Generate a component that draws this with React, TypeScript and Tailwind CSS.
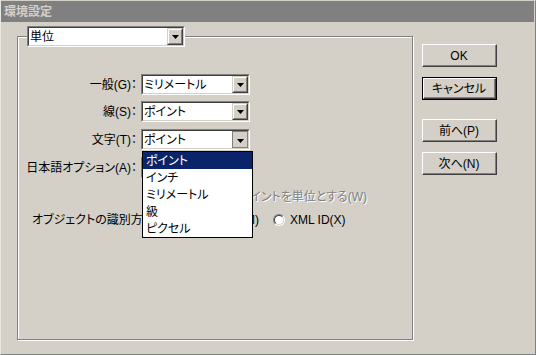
import React from "react";

const FONT = "[font-family:'Liberation_Sans','Noto_Sans_CJK_JP',sans-serif] [font-feature-settings:'palt']";

function Arrow() {
  return (
    <svg width="7" height="4" viewBox="0 0 7 4">
      <path d="M0 0h7L3.5 4z" fill="#000" />
    </svg>
  );
}

function Combo({ text, width, open }: { text: string; width: number; open?: boolean }) {
  return (
    <div
      className="h-[21px] flex border-t border-l border-t-[#808080] border-l-[#808080] border-b border-r border-b-white border-r-white"
      style={{ width }}
    >
      <div className="flex-1 flex border-t border-l border-t-[#404040] border-l-[#404040] border-b border-r border-b-[#d4d0c8] border-r-[#d4d0c8] bg-white">
        <div className="flex-1 flex items-center pl-[1px] text-[12px] leading-none text-black whitespace-nowrap overflow-hidden">
          {text}
        </div>
        {open ? (
          <div className="w-[16px] flex items-center justify-center bg-[#d4d0c8] border border-[#808080] pt-[2px] pl-[1px]">
            <Arrow />
          </div>
        ) : (
          <div className="w-[16px] flex border-t border-l border-t-[#d4d0c8] border-l-[#d4d0c8] border-b border-r border-b-[#404040] border-r-[#404040]">
            <div className="flex-1 flex items-center justify-center bg-[#d4d0c8] border-t border-l border-t-white border-l-white border-b border-r border-b-[#808080] border-r-[#808080]">
              <Arrow />
            </div>
          </div>
        )}
      </div>
    </div>
  );
}

function Btn({ label, def }: { label: string; def?: boolean }) {
  const inner = (
    <div className="flex-1 flex border-t border-l border-t-white border-l-white border-b border-r border-b-[#404040] border-r-[#404040]">
      <div className="flex-1 flex items-center justify-center border-b border-r border-b-[#808080] border-r-[#808080] text-[12px] text-black leading-none pt-[1px]">
        {label}
      </div>
    </div>
  );
  return (
    <div className={"w-[75px] h-[23px] flex " + (def ? "border border-black" : "")}>{inner}</div>
  );
}

function Row({ label, children, mt }: { label: string; children: React.ReactNode; mt: string }) {
  return (
    <div className={"flex items-center " + mt}>
      <div className="w-[119px] flex justify-end text-[12px] text-black whitespace-nowrap leading-none">{label}</div>
      <div className="ml-[4px]">{children}</div>
    </div>
  );
}

export default function App() {
  return (
    <div className={"w-[536px] h-[355px] bg-[#d4d0c8] relative flex flex-col overflow-hidden border-t border-t-[#d4d0c8] border-l border-l-[#e8e6e0] border-r border-r-[#808080] border-b border-b-[#808080] " + FONT}>
      <div className="h-[21px] bg-[#808080] flex items-center pl-[3px] mr-[1px]">
        <span className="text-[12px] font-bold text-[#d4d0c8] leading-none">環境設定</span>
      </div>
      <div className="flex">
        {/* group box */}
        <div className="relative ml-[16px] mt-[14px] w-[396px] h-[304px] border border-[#808080] shadow-[inset_1px_1px_0_#fff,1px_1px_0_#fff] flex flex-col pt-[37px]">
          <div className="absolute left-[9px] top-[-11px] bg-[#d4d0c8]">
            <Combo text="単位" width={158} />
          </div>
          <Row label="一般(G)：" mt="">
            <Combo text="ミリメートル" width={109} />
          </Row>
          <Row label="線(S)：" mt="mt-[6px]">
            <Combo text="ポイント" width={109} />
          </Row>
          <Row label="文字(T)：" mt="mt-[7px]">
            <Combo text="ポイント" width={109} open />
          </Row>
          <Row label="日本語オプション(A)：" mt="mt-[7px]">
            <Combo text="" width={109} />
          </Row>
          <div className="mt-[11px] h-[15px] flex">
            <div className="ml-[200px] w-[149px] flex justify-end items-center whitespace-nowrap text-[12px] leading-none text-[#808080] [text-shadow:1px_1px_0_#fff]">
              ポイントを単位とする(W)
            </div>
          </div>
          <div className="mt-[8px] h-[16px] flex items-center text-[12px] leading-none text-black">
            <div className="ml-[14px] w-[109px] whitespace-nowrap">オブジェクトの識別方法：</div>
            <div className="w-[118px] flex justify-end whitespace-nowrap">
              <span>(M)</span>
            </div>
            <div className="ml-[14px] w-[12px] h-[12px] rounded-full border border-t-[#808080] border-l-[#808080] border-b-white border-r-white">
              <div className="w-full h-full rounded-full bg-white border border-t-[#404040] border-l-[#404040] border-b-[#d4d0c8] border-r-[#d4d0c8]" />
            </div>
            <span className="ml-[5px] whitespace-nowrap">XML ID(X)</span>
          </div>
        </div>
        {/* buttons */}
        <div className="ml-[9px] mt-[22px] flex flex-col">
          <Btn label="OK" />
          <div className="mt-[10px]">
            <Btn label="キャンセル" def />
          </div>
          <div className="mt-[19px]">
            <Btn label="前へ(P)" />
          </div>
          <div className="mt-[10px]">
            <Btn label="次へ(N)" />
          </div>
        </div>
      </div>
      {/* open dropdown list */}
      <div className="absolute left-[141px] top-[150px] w-[111px] h-[87px] bg-white border border-black flex flex-col text-[12px] leading-none text-black">
        <div className="h-[17px] bg-[#0a246a] text-white flex items-center pl-[3px]">ポイント</div>
        <div className="h-[17px] flex items-center pl-[3px]">インチ</div>
        <div className="h-[17px] flex items-center pl-[3px]">ミリメートル</div>
        <div className="h-[17px] flex items-center pl-[3px]">級</div>
        <div className="h-[17px] flex items-center pl-[3px]">ピクセル</div>
      </div>
    </div>
  );
}
